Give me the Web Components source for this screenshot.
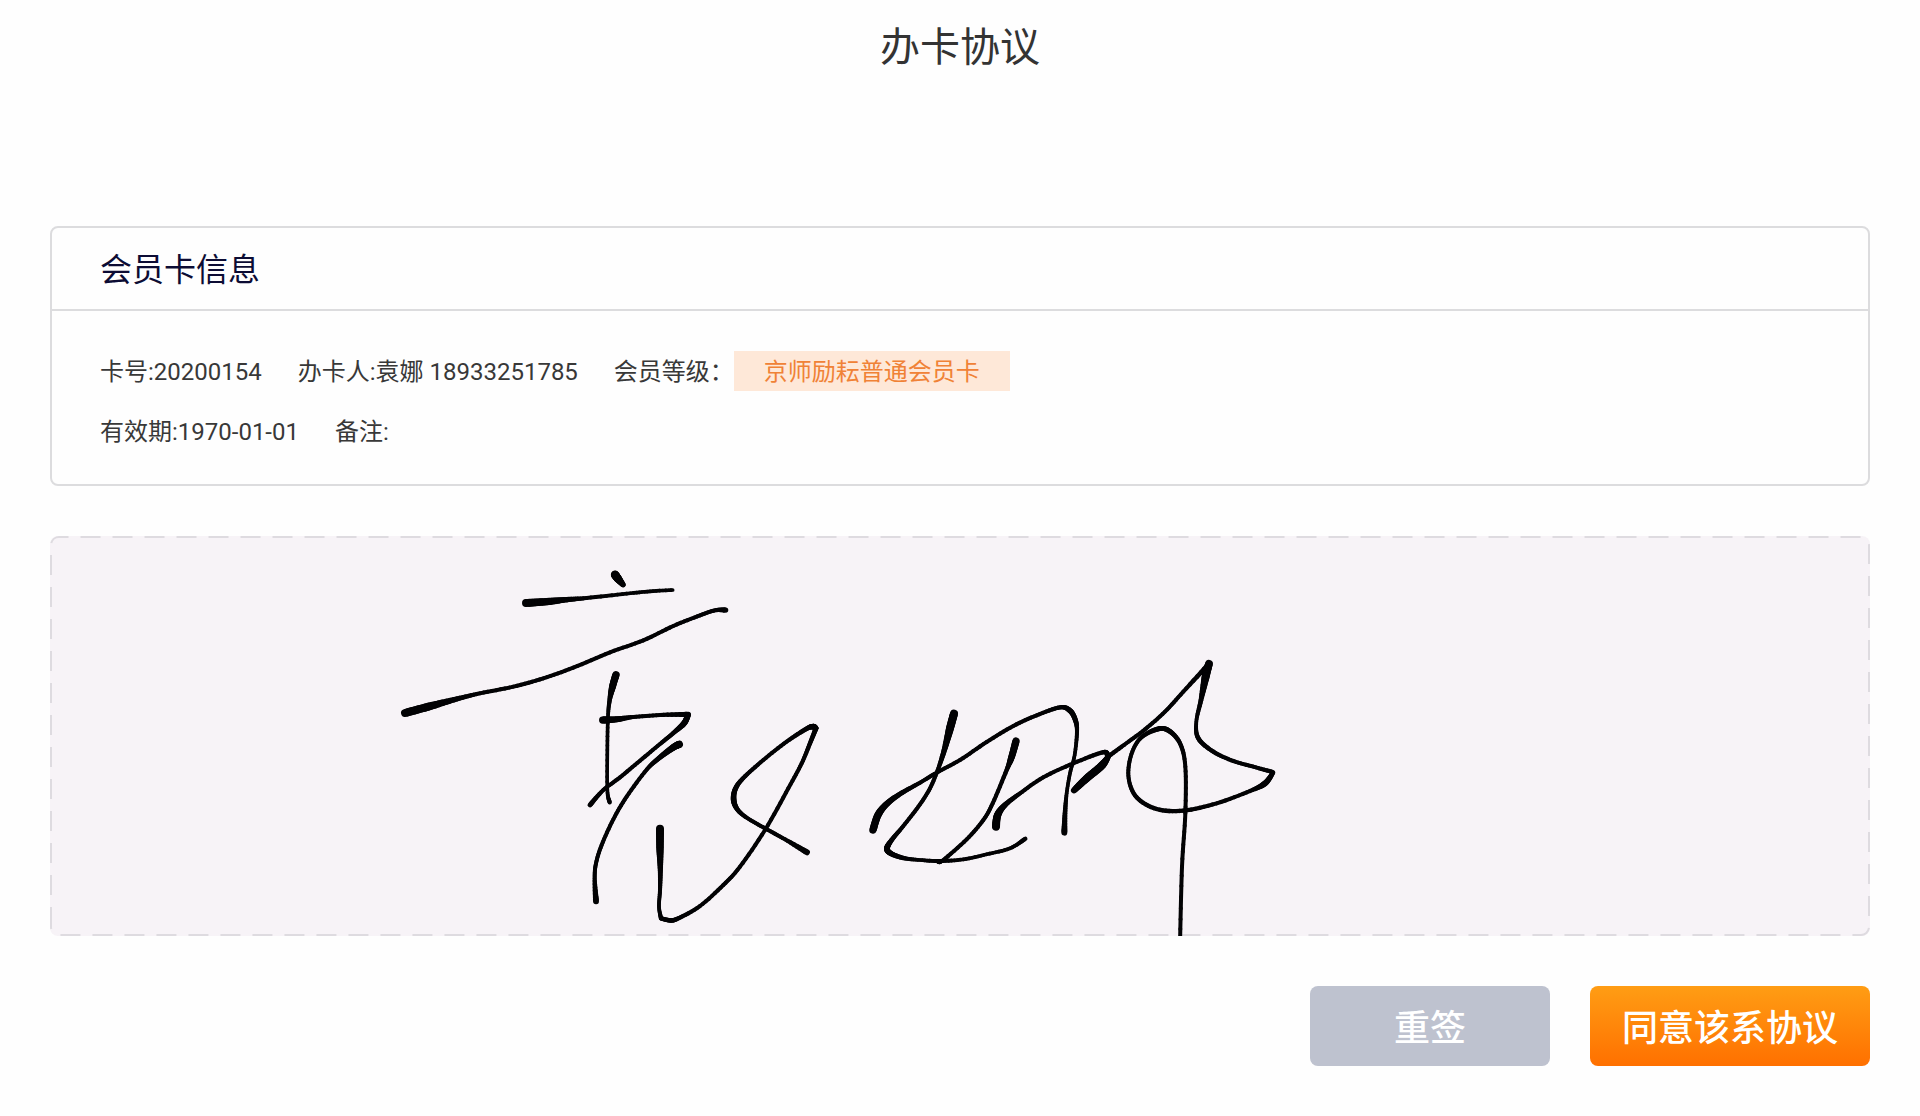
<!DOCTYPE html>
<html lang="zh-CN">
<head>
<meta charset="utf-8">
<title>办卡协议</title>
<style>
  body {
    margin: 0;
    background: #fefefe;
    color: #333;
    font-family: Roboto, "Noto Sans CJK SC", sans-serif;
  }
</style>
</head>
<body>
<agreement-page>
  <span slot="title">办卡协议</span>
  <member-card>
    <span slot="heading">会员卡信息</span>
    <info-row>
      <info-item>卡号:20200154</info-item>
      <info-item>办卡人:袁娜 18933251785</info-item>
      <info-item>会员等级：<level-tag slot="tag">京师励耘普通会员卡</level-tag></info-item>
    </info-row>
    <info-row>
      <info-item>有效期:1970-01-01</info-item>
      <info-item>备注:</info-item>
    </info-row>
  </member-card>
  <signature-pad></signature-pad>
  <action-button slot="actions">重签</action-button>
  <action-button slot="actions" kind="primary">同意该系协议</action-button>
</agreement-page>

<script>
function define(name, html, setup) {
  const template = document.createElement('template');
  template.innerHTML = html;
  customElements.define(name, class extends HTMLElement {
    connectedCallback() {
      if (this.shadowRoot) return;
      this.attachShadow({ mode: 'open' }).append(template.content.cloneNode(true));
      if (setup) setup(this);
    }
  });
}

define('agreement-page', `
  <style>
    :host { display: block; padding: 18px 50px 50px; }
    h1 { margin: 0 0 148px; font-size: 40px; line-height: 60px; font-weight: 400; text-align: center; }
    main { display: flex; flex-direction: column; gap: 50px; }
    footer { display: flex; justify-content: flex-end; gap: 40px; }
  </style>
  <h1><slot name="title"></slot></h1>
  <main>
    <slot></slot>
    <footer><slot name="actions"></slot></footer>
  </main>`);

define('member-card', `
  <style>
    :host { display: block; border: 2px solid #dcdcde; border-radius: 8px; }
    h2 { margin: 0; padding: 18px 48px 15px; border-bottom: 2px solid #dcdcde;
         font-size: 32px; line-height: 48px; font-weight: 400; color: #0c0c34; }
    .rows { display: flex; flex-direction: column; gap: 20px; padding: 40px 48px 33px; }
  </style>
  <h2><slot name="heading"></slot></h2>
  <div class="rows"><slot></slot></div>`);

define('info-row', `
  <style>:host { display: flex; flex-wrap: wrap; gap: 36px; }</style>
  <slot></slot>`);

define('info-item', `
  <style>
    :host { display: flex; font-size: 24px; line-height: 38px; white-space: nowrap; color: #383838; }
    span { padding-top: 2px; }
  </style>
  <span><slot></slot></span><slot name="tag"></slot>`);

define('level-tag', `
  <style>:host { display: block; padding: 2px 30px 0; background: #fee8d8; color: #f08236; }</style>
  <slot></slot>`);

define('action-button', `
  <style>
    button { display: block; min-width: 240px; height: 80px; padding: 5px 32px 0; border: 0; border-radius: 8px;
      background: #bec2cf; color: #fff;
      font: 500 36px/48px Roboto, "Noto Sans CJK SC", sans-serif; cursor: pointer; }
    :host([kind="primary"]) button { background: linear-gradient(#ff9d14, #ff7000); }
  </style>
  <button type="button"><slot></slot></button>`);

// Pen strokes: x, y, pen width, in thirds of a pixel from each character's origin.
const CHARACTERS = [
  { x: 330, y: 14, strokes: [
    [[705,74,25],[714,86,24],[730,105,14]],
    [[438,159,24],[500,155,22],[560,149,16],[620,144,12],[740,131,11],[810,124,11],[878,120,11]],
    [[75,489,24],[145,470,24],[230,447,15],[300,430,12],[400,410,12],[490,385,12],[580,353,12],[690,307,12],[790,271,12],[880,228,12],[960,196,12],[1005,181,12],[1037,180,16]],
    [[708,374,22],[698,408,21],[689,450,13],[684,500,11],[682,600,11],[682,720,11],[689,757,13]],
    [[668,510,22],[710,508,18],[760,501,12],[840,495,12],[925,493,16]],
    [[924,495,17],[912,520,18],[880,549,13],[840,582,12],[780,632,12],[720,682,12],[670,720,12],[630,765,15]],
    [[898,583,22],[880,592,20],[840,622,15],[800,659,12],[740,740,12],[700,808,12],[665,885,12],[648,940,12],[644,985,12],[648,1054,18]],
    [[840,836,24],[840,895,22],[841,960,15],[840,1020,12],[837,1070,11],[843,1105,13]],
    [[843,1105,13],[870,1111,14],[895,1105,13],[960,1068,12],[1030,1005,12],[1080,950,12],[1155,840,12],[1225,715,12],[1265,640,12],[1290,580,13],[1308,535,15]],
    [[1308,535,15],[1300,530,17],[1280,536,14],[1220,575,12],[1150,630,12],[1090,684,13],[1066,717,15],[1061,750,17],[1072,778,14],[1100,803,12],[1157,836,12],[1215,868,12],[1281,907,18]]
  ]},
  { x: 790, y: 104, strokes: [
    [[342,221,24],[330,265,24],[313,330,16],[295,385,12],[270,445,12],[235,500,12],[190,558,12],[155,600,14],[141,625,18],[152,640,16],[190,654,13],[240,660,11],[300,663,12],[370,658,11],[440,643,11],[510,625,11],[556,596,13]],
    [[99,570,22],[114,525,22],[140,492,18],[180,462,15],[240,428,12],[290,398,12],[360,360,12],[440,306,12],[520,258,12],[590,226,12],[660,202,13],[690,212,16],[706,240,15],[711,275,12],[704,345,11],[690,400,11],[680,460,11],[675,520,14],[673,578,18]],
    [[528,303,22],[515,350,20],[500,390,13],[458,490,12],[430,540,12],[380,598,12],[310,660,12],[294,665,12]],
    [[468,560,24],[473,525,22],[495,495,16],[540,460,12],[610,412,12],[700,370,12],[788,337,13],[803,346,16]],
    [[702,451,18],[740,415,23],[785,377,24],[806,348,14]],
    [[804,350,13],[860,309,12],[915,268,12],[975,215,12],[1030,155,12],[1107,71,15]],
    [[1107,71,23],[1097,110,24],[1083,180,14],[1069,245,11],[1075,295,14],[1120,335,13],[1180,363,12],[1240,380,12],[1298,396,13]],
    [[1299,398,13],[1275,430,18],[1230,453,12],[1130,490,12],[1030,512,13],[950,507,13],[890,472,13],[866,415,12],[872,350,12],[900,296,12],[950,268,15],[985,271,15],[1020,310,13],[1036,380,12],[1036,520,12],[1026,680,12],[1020,910,12]]
  ]}
];

// Smooth curve through the points, with the pen width eased between them.
function inkStroke(points) {
  const spline = (a, b, c, d, t) =>
    b + t * ((c - a) / 2 + t * (a - 2.5 * b + 2 * c - d / 2 + t * (1.5 * (b - c) + (d - a) / 2)));
  const out = [];
  let last = points[0];
  for (let i = 0; i < points.length - 1; i++) {
    const p = [points[i - 1] || points[i], points[i], points[i + 1], points[i + 2] || points[i + 1]];
    for (let s = 1; s <= 8; s++) {
      const t = s / 8;
      const next = [
        spline(p[0][0], p[1][0], p[2][0], p[3][0], t),
        spline(p[0][1], p[1][1], p[2][1], p[3][1], t),
        p[1][2] + (p[2][2] - p[1][2]) * t
      ];
      out.push(`<path d="M${last[0]} ${last[1]}L${next[0]} ${next[1]}" stroke-width="${(last[2] + next[2]) / 2}"/>`);
      last = next;
    }
  }
  return out.join('');
}

define('signature-pad', `
  <style>
    :host { display: block; height: 400px; border-radius: 8px; background: #f7f3f7; }
    svg { display: block; width: 100%; height: 100%; }
    .frame { fill: none; stroke: #dedbe0; stroke-width: 2; stroke-dasharray: 20 12; }
    .ink { stroke: #020204; stroke-linecap: round; }
  </style>
  <svg role="img" aria-label="签名"><path class="frame"/><g class="ink"></g></svg>`,
  host => {
    const frame = host.shadowRoot.querySelector('.frame');
    host.shadowRoot.querySelector('.ink').innerHTML = CHARACTERS.map(c =>
      `<g transform="translate(${c.x} ${c.y}) scale(${1 / 3})">${c.strokes.map(inkStroke).join('')}</g>`).join('');
    // The dashes start above the lower left corner and run clockwise.
    const drawFrame = () => {
      const w = host.clientWidth - 1, h = host.clientHeight - 1, r = 8;
      frame.setAttribute('d', `M1 ${h - r}V${1 + r}A${r} ${r} 0 0 1 ${1 + r} 1H${w - r}A${r} ${r} 0 0 1 ${w} ${1 + r}` +
        `V${h - r}A${r} ${r} 0 0 1 ${w - r} ${h}H${1 + r}A${r} ${r} 0 0 1 1 ${h - r}Z`);
    };
    drawFrame();
    new ResizeObserver(drawFrame).observe(host);
  });
</script>
</body>
</html>
